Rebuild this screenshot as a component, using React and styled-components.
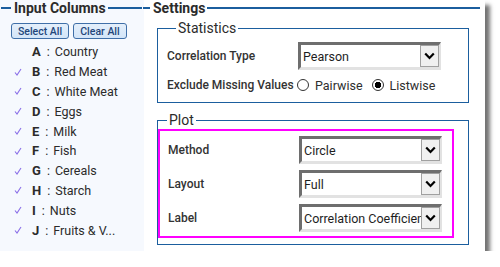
import React from 'react'
import styled, { createGlobalStyle } from 'styled-components'

const GlobalStyle = createGlobalStyle`
  html, body {
    margin: 0;
    padding: 0;
    background: #ffffff;
  }
  body {
    font-family: Roboto, "Noto Sans", sans-serif;
    color: #2b2b2b;
  }
`

const columns = [
  { key: 'A', name: 'Country', checked: false },
  { key: 'B', name: 'Red Meat', checked: true },
  { key: 'C', name: 'White Meat', checked: true },
  { key: 'D', name: 'Eggs', checked: true },
  { key: 'E', name: 'Milk', checked: true },
  { key: 'F', name: 'Fish', checked: true },
  { key: 'G', name: 'Cereals', checked: true },
  { key: 'H', name: 'Starch', checked: true },
  { key: 'I', name: 'Nuts', checked: true },
  { key: 'J', name: 'Fruits & V...', checked: true },
]

function Check() {
  return (
    <svg width="8" height="8" viewBox="0 0 8 8">
      <polyline points="1,4.5 3,7 7,1" fill="none" stroke="#8a6fe8" strokeWidth="1.1" />
    </svg>
  )
}

function Chevron() {
  return (
    <svg width="11" height="8" viewBox="0 0 11 8">
      <polyline points="1.2,1.5 5.5,6 9.8,1.5" fill="none" stroke="#000" strokeWidth="2.2" />
    </svg>
  )
}

function Select({ value }) {
  return (
    <SelectBox>
      <SelectText>{value}</SelectText>
      <DropButton>
        <Chevron />
      </DropButton>
    </SelectBox>
  )
}

export default function App() {
  return (
    <>
      <GlobalStyle />
      <Window>
        <LeftPanel>
          <Header>
            <Rule $w="10px" />
            <HeaderTitle>Input Columns</HeaderTitle>
            <Rule />
          </Header>
          <ButtonRow>
            <SmallButton $w="58px">Select All</SmallButton>
            <SmallButton $w="54px">Clear All</SmallButton>
          </ButtonRow>
          <ColumnList>
            {columns.map((c) => (
              <ColumnItem key={c.key}>
                <CheckSlot>{c.checked && <Check />}</CheckSlot>
                <ColKey>{c.key}</ColKey>
                <Colon>:</Colon>
                <ColName>{c.name}</ColName>
              </ColumnItem>
            ))}
          </ColumnList>
        </LeftPanel>
        <RightPanel>
          <Header $right>
            <Rule $w="7px" />
            <HeaderTitle>Settings</HeaderTitle>
            <Rule />
          </Header>
          <Group>
            <Legend>Statistics</Legend>
            <StatRow>
              <Label>Correlation Type</Label>
              <Select value="Pearson" />
            </StatRow>
            <RadioRow>
              <Label>Exclude Missing Values</Label>
              <RadioGroup>
                <RadioOption>
                  <Radio />
                  Pairwise
                </RadioOption>
                <RadioOption>
                  <Radio $on />
                  Listwise
                </RadioOption>
              </RadioGroup>
            </RadioRow>
          </Group>
          <Group $plot>
            <Legend>Plot</Legend>
            <Highlight>
              <PlotRow>
                <Label>Method</Label>
                <Select value="Circle" />
              </PlotRow>
              <PlotRow>
                <Label>Layout</Label>
                <Select value="Full" />
              </PlotRow>
              <PlotRow>
                <Label>Label</Label>
                <Select value="Correlation Coefficient" />
              </PlotRow>
            </Highlight>
          </Group>
        </RightPanel>
      </Window>
    </>
  )
}

const Window = styled.div`
  width: 485px;
  height: 251px;
  display: flex;
  background: #fff;
  box-shadow: 5px 5px 4px rgba(0, 0, 0, 0.55);
`

const LeftPanel = styled.div`
  width: 144px;
  flex: none;
  background: #f6f9fe;
  display: flex;
  flex-direction: column;
`

const RightPanel = styled.div`
  flex: 1;
  display: flex;
  flex-direction: column;
  padding-right: 7px;
`

const Header = styled.div`
  display: flex;
  align-items: center;
  height: 16px;
  padding: 0 ${(p) => (p.$right ? '0' : '2px')} 0 ${(p) => (p.$right ? '0' : '1px')};
  margin-left: ${(p) => (p.$right ? '-1px' : '0')};
`

const Rule = styled.div`
  height: 2px;
  background: #1b5e9e;
  width: ${(p) => p.$w || 'auto'};
  flex: ${(p) => (p.$w ? 'none' : '1')};
`

const HeaderTitle = styled.div`
  font-size: 14px;
  font-weight: 700;
  color: #2b2b2b;
  padding: 0 2px 0 3px;
`

const ButtonRow = styled.div`
  display: flex;
  gap: 4px;
  padding: 7px 0 0 11px;
`

const SmallButton = styled.div`
  width: ${(p) => p.$w};
  height: 16px;
  box-sizing: border-box;
  border: 1px solid #3f6fa8;
  border-radius: 3px;
  background: linear-gradient(#e4effb, #d3e5f8);
  font-size: 10.5px;
  font-weight: 500;
  color: #23467a;
  display: flex;
  align-items: center;
  justify-content: center;
`

const ColumnList = styled.div`
  display: flex;
  flex-direction: column;
  padding-top: 3px;
`

const ColumnItem = styled.div`
  height: 19.8px;
  display: flex;
  align-items: center;
  font-size: 12.5px;
  color: #2b2b2b;
`

const CheckSlot = styled.div`
  width: 32px;
  padding-left: 14px;
  box-sizing: border-box;
  display: flex;
  align-items: center;
`

const ColKey = styled.span`
  font-weight: 700;
  font-size: 13px;
`

const Colon = styled.span`
  padding: 0 5px 0 6px;
`

const ColName = styled.span``

const Group = styled.fieldset`
  margin: ${(p) => (p.$plot ? '9px' : '4px')} 11px 0 13px;
  padding: ${(p) => (p.$plot ? '0 14px 6px 0' : '6px 10px 2px 9px')};
  border: 1px solid #1b5e9e;
  min-width: 0;
`

const Legend = styled.legend`
  font-size: 14px;
  font-weight: 400;
  padding: 0 2px;
  margin-left: 9px;
  line-height: 16px;
  color: #2b2b2b;
`

const Label = styled.div`
  font-size: 12px;
  font-weight: 500;
  color: #333;
  width: 131px;
  flex: none;
  white-space: nowrap;
`

const StatRow = styled.div`
  display: flex;
  align-items: center;
`

const RadioRow = styled.div`
  display: flex;
  align-items: center;
  height: 30px;
`

const RadioGroup = styled.div`
  display: flex;
  gap: 9px;
  margin-left: -1px;
`

const RadioOption = styled.div`
  display: flex;
  align-items: center;
  gap: 6px;
  font-size: 12.5px;
  color: #2e2e2e;
`

const Radio = styled.span`
  width: 12px;
  height: 12px;
  box-sizing: border-box;
  border: 1px solid #333;
  border-radius: 50%;
  background: ${(p) => (p.$on ? 'radial-gradient(circle, #000 0 3px, #fff 3.5px)' : '#fff')};
`

const Highlight = styled.div`
  border: 2px solid #ff00ff;
  display: flex;
  flex-direction: column;
  gap: 6px;
  padding: 5px 10px 4px 8px;
  margin-top: 1px;
`

const PlotRow = styled.div`
  display: flex;
  align-items: center;
`

const SelectBox = styled.div`
  width: 143px;
  height: 28px;
  box-sizing: border-box;
  border-top: 3px solid #6e6e6e;
  border-left: 3px solid #6e6e6e;
  border-bottom: 3px solid #e2e2e2;
  border-right: 2px solid #e2e2e2;
  background: #fff;
  display: flex;
  align-items: center;
  overflow: hidden;
`

const SelectText = styled.div`
  flex: 1;
  font-size: 12.5px;
  color: #1e1e1e;
  padding-left: 2px;
  white-space: nowrap;
  overflow: hidden;
  min-width: 0;
`

const DropButton = styled.div`
  width: 19px;
  height: 100%;
  box-sizing: border-box;
  border: 1px solid #a0a0a0;
  background: #f0f0f0;
  display: flex;
  align-items: center;
  justify-content: center;
  flex: none;
`
